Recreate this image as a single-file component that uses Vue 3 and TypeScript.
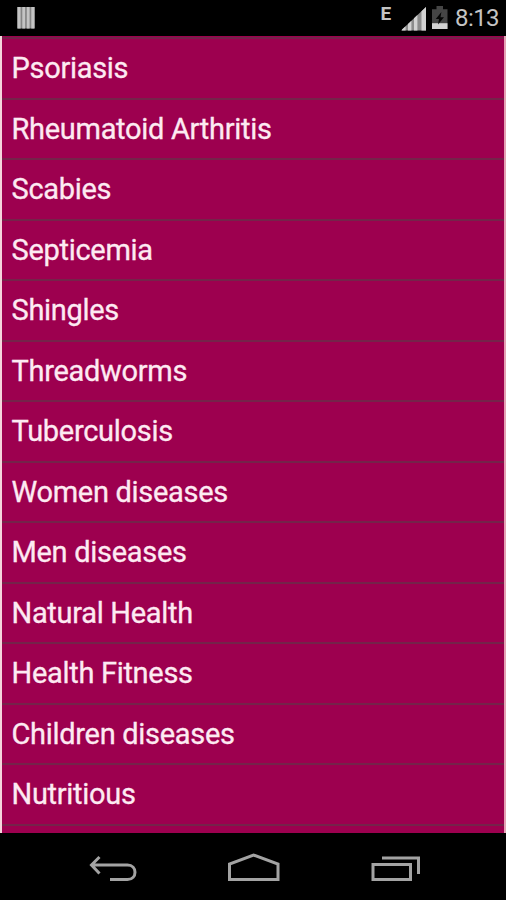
<script setup lang="ts">
const topics: string[] = [
  'Psoriasis',
  'Rheumatoid Arthritis',
  'Scabies',
  'Septicemia',
  'Shingles',
  'Threadworms',
  'Tuberculosis',
  'Women diseases',
  'Men diseases',
  'Natural Health',
  'Health Fitness',
  'Children diseases',
  'Nutritious',
]
</script>

<template>
  <div class="screen">
    <header class="status">
      <svg class="bars" width="18" height="22" viewBox="0 0 18 22">
        <rect width="18" height="21.5" fill="#858585" />
        <path d="M2.2 0v21.5M6.7 0v21.5M11.2 0v21.5M15.7 0v21.5" stroke="#c4c4c4" stroke-width="2.8" />
      </svg>
      <div class="indicators">
        <span class="network">E</span>
        <svg class="signal" width="26" height="24" viewBox="0 0 26 24">
          <path d="M0 23.5L25 0V23.5Z" fill="#8c8c8c" />
          <path d="M1 23.5V22.6L4.6 19.2V23.5ZM7 23.5V17L10.4 13.8V23.5ZM13 23.5V11.3L16.4 8.1V23.5ZM20.5 23.5V4.2L25 0V23.5Z" fill="#d2d2d2" />
        </svg>
        <svg class="battery" width="16" height="24" viewBox="0 0 16 24">
          <path d="M0 3.2H4.5V0H11V3.2H15.5V23H0Z" fill="#454545" />
          <path d="M0 17.2H15.5V23H0Z" fill="#d2d2d2" />
          <path d="M9.4 6L3.8 13H7L6 18.5L12 11.2H8.5Z" fill="#050505" />
        </svg>
        <span class="clock">8:13</span>
      </div>
    </header>

    <main class="list">
      <ul>
        <li v-for="topic in topics" :key="topic"><span>{{ topic }}</span></li>
      </ul>
    </main>

    <nav class="nav">
      <svg width="506" height="67" viewBox="0 0 506 67" fill="none" stroke="#a3a3a3" stroke-width="3">
        <path d="M99.500 24L91.500 32L99.500 40.500M92 32H127.500C137.500 32 137.500 46.500 127.500 46.500H110" />
        <path d="M229.500 46.500V31L253.500 22L278 31V46.500Z" />
        <path d="M373 31.500H410.500V46.500H373ZM382 25H418.500V41" />
      </svg>
    </nav>
  </div>
</template>

<style>
body {
  margin: 0;
  background: #000;
}
</style>

<style scoped>
.screen {
  width: 506px;
  height: 900px;
  display: flex;
  flex-direction: column;
  overflow: hidden;
  background: #000;
  font-family: Roboto, sans-serif;
}
.status {
  height: 36px;
  flex: none;
  box-sizing: border-box;
  display: flex;
  justify-content: space-between;
  padding: 7px 7px 0 16.500px;
}
.indicators {
  display: flex;
  color: #c4c4c4;
}
.network {
  font-size: 19px;
  font-weight: 700;
  line-height: 13px;
  margin-right: 10px;
}
.battery {
  margin: -1px 7px 0 5px;
}
.clock {
  font-size: 24px;
  line-height: 23px;
  letter-spacing: -0.6px;
}
.list {
  height: 797px;
  flex: none;
  box-sizing: border-box;
  overflow: hidden;
  background: #9d004f;
  border-left: 2px solid #f5d5dc;
  border-right: 2px solid #e5a0b4;
  padding-top: 1px;
}
ul {
  list-style: none;
  margin: 0;
  padding: 0;
  border-top: 2px solid #75234a;
}
li {
  height: 60.500px;
  box-sizing: border-box;
  border-bottom: 2px solid #75234a;
  padding-left: 9.500px;
  display: flex;
  align-items: center;
  color: #fdeaf2;
  font-size: 29px;
  letter-spacing: -0.3px;
  -webkit-text-stroke: 0.3px #fdeaf2;
  white-space: nowrap;
}
.nav {
  flex: 1;
}
.nav svg {
  display: block;
}
</style>
